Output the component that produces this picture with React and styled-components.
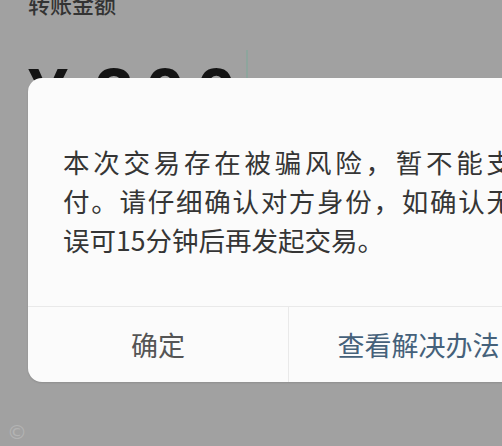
import styled, { createGlobalStyle } from "styled-components";

const GlobalStyle = createGlobalStyle`
    html, body {
        margin: 0;
        padding: 0;
        width: 502px;
        height: 446px;
        overflow: hidden;
        background: #a1a1a1;
    }
    * {
        box-sizing: border-box;
    }
`

const CJK = `"Noto Sans CJK SC", "Noto Sans", sans-serif`

export default function App() {
    return (
        <>
            <GlobalStyle />
            <Screen>
                <AmountLabel>转账金额</AmountLabel>
                <AmountRow>
                    <Currency>¥</Currency>
                    <Digits>200</Digits>
                    <Caret />
                </AmountRow>

                <Dialog>
                    <Message>
                        <Line $justify>本次交易存在被骗风险，暂不能支</Line>
                        <Line $justify>付。请仔细确认对方身份，如确认无</Line>
                        <Line>误可15分钟后再发起交易。</Line>
                    </Message>
                    <Actions>
                        <ActionButton>确定</ActionButton>
                        <ActionButton $primary>查看解决办法</ActionButton>
                    </Actions>
                </Dialog>

                <Watermark>©</Watermark>
            </Screen>
        </>
    );
}

const Screen = styled.div`
    position: relative;
    width: 502px;
    height: 446px;
    padding: 0 28px;
    overflow: hidden;
    background: #a1a1a1;
`

const AmountLabel = styled.div`
    margin-top: -12px;
    font-family: ${CJK};
    font-size: 22px;
    font-weight: 500;
    line-height: 30px;
    color: #333333;
`

const AmountRow = styled.div`
    display: flex;
    align-items: flex-start;
    margin-top: 40px;
    font-family: "Liberation Sans", Arial, sans-serif;
    font-weight: 700;
    font-size: 72px;
    line-height: 1;
    color: #141414;
`

const Currency = styled.span`
    margin-right: 26px;
`

const Digits = styled.span`
    letter-spacing: 11px;
`

const Caret = styled.span`
    width: 2px;
    height: 70px;
    margin-top: -8px;
    margin-left: -1px;
    background: #8ea59d;
`

const Dialog = styled.div`
    position: absolute;
    top: 78px;
    left: 28px;
    width: 520px;
    border-radius: 14px;
    background: #fbfbfb;
    box-shadow: 0 1px 2px rgba(0, 0, 0, 0.12);
    overflow: hidden;
`

const Message = styled.div`
    padding: 64px 35px 47px;
    font-family: ${CJK};
    font-size: 26.5px;
    line-height: 39px;
    color: #353535;
`

const Line = styled.div`
    white-space: nowrap;
    text-align: ${p => (p.$justify ? "justify" : "left")};
    text-align-last: ${p => (p.$justify ? "justify" : "auto")};
    text-justify: inter-character;
`

const Actions = styled.div`
    display: grid;
    grid-template-columns: 1fr 1fr;
    height: 76px;
    border-top: 1px solid #e9e9e9;
`

const ActionButton = styled.div`
    display: flex;
    align-items: center;
    justify-content: center;
    font-family: ${CJK};
    font-size: 27px;
    color: ${p => (p.$primary ? "#45617a" : "#555555")};
    & + & {
        border-left: 1px solid #e9e9e9;
    }
`

const Watermark = styled.span`
    position: absolute;
    left: 7px;
    top: 419px;
    font-family: "DejaVu Sans", sans-serif;
    font-size: 20px;
    line-height: 26px;
    color: #b3b3b3;
`
